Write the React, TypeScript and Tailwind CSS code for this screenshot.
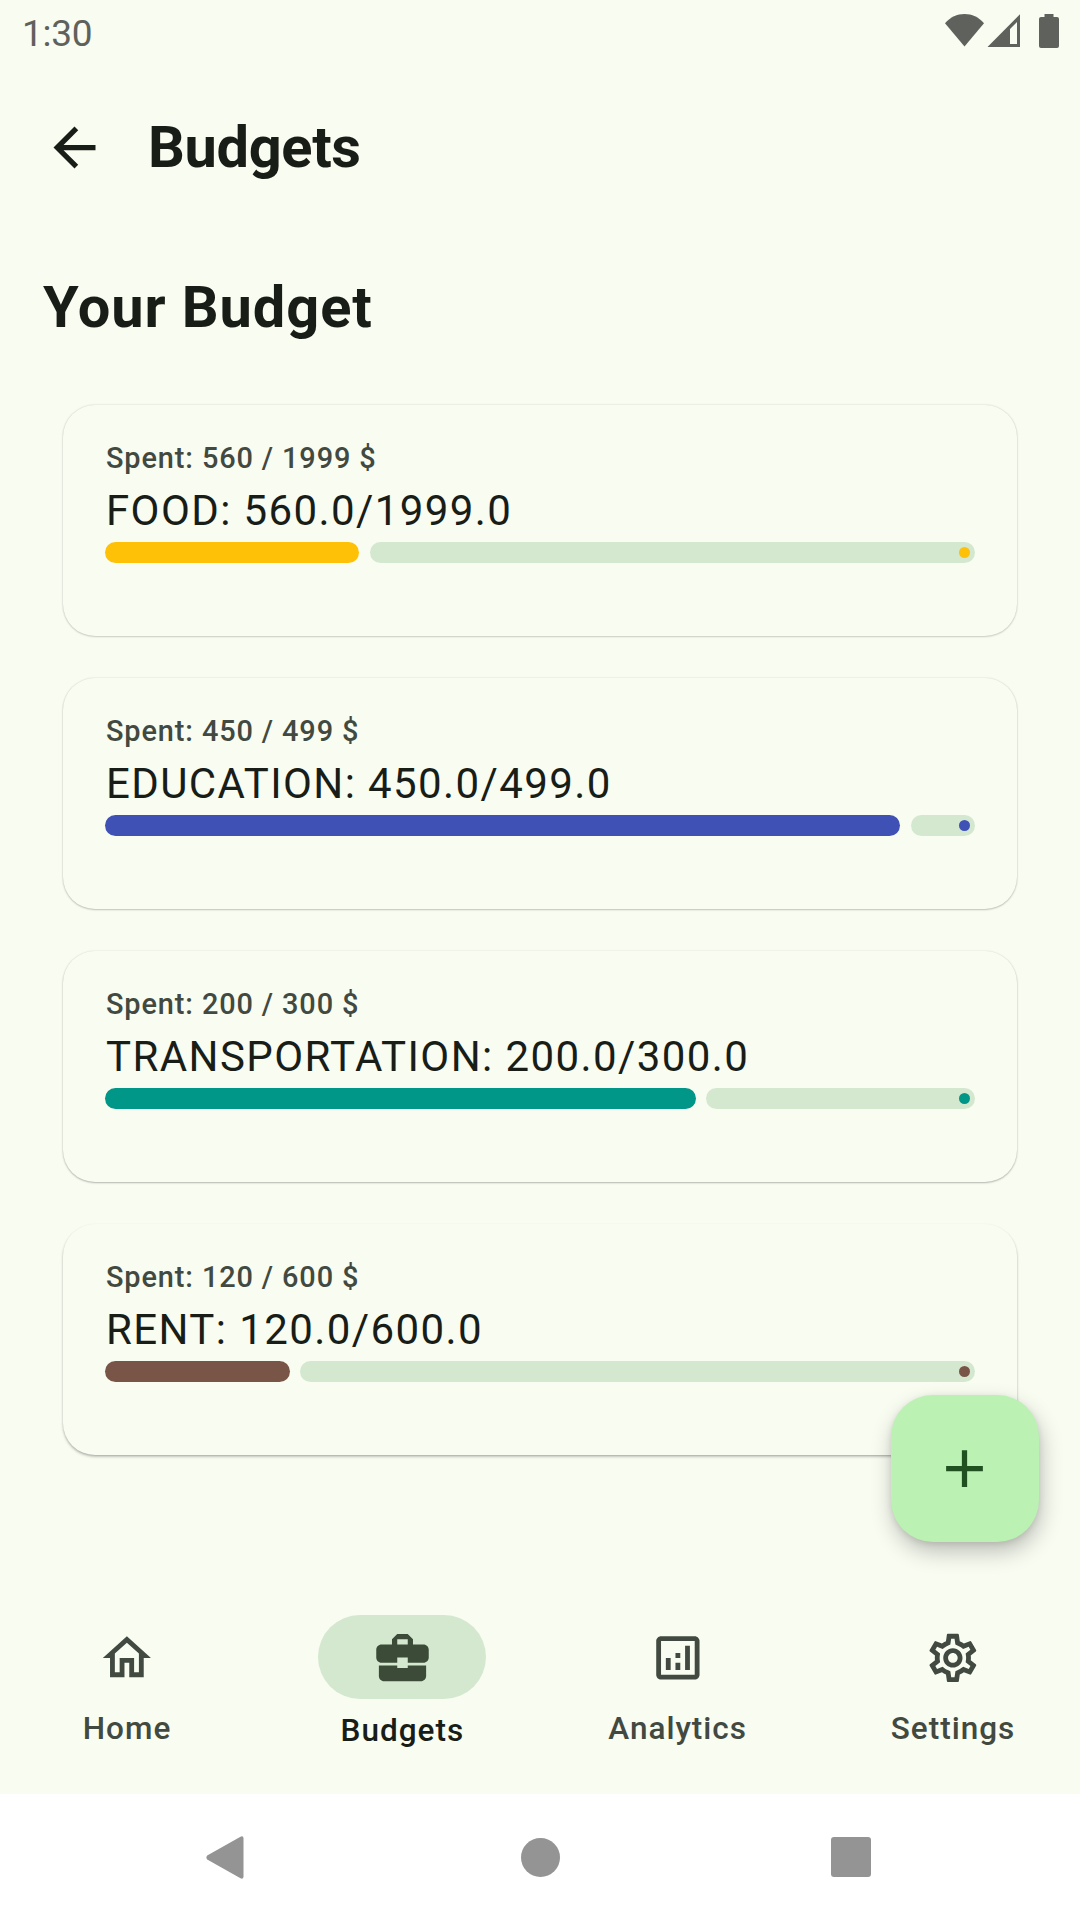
import React from "react";
import {
  MdAdd,
  MdArrowBack,
  MdBusinessCenter,
  MdOutlineAnalytics,
  MdOutlineHome,
  MdOutlineSettings,
} from "react-icons/md";

type Budget = {
  name: string;
  spent: number;
  limit: number;
  fill: string;
  shadow: string;
};

const budgets: Budget[] = [
  { name: "FOOD", spent: 560, limit: 1999, fill: "bg-[#ffc107]", shadow: "shadow-[0_0_2px_rgba(0,0,0,0.18),0_1px_2px_rgba(0,0,0,0.14)]" },
  { name: "EDUCATION", spent: 450, limit: 499, fill: "bg-[#3f51b5]", shadow: "shadow-[0_0_2px_rgba(0,0,0,0.14),0_1px_2px_rgba(0,0,0,0.2)]" },
  { name: "TRANSPORTATION", spent: 200, limit: 300, fill: "bg-[#009688]", shadow: "shadow-[0_0_2px_rgba(0,0,0,0.1),0_1px_2px_rgba(0,0,0,0.26)]" },
  { name: "RENT", spent: 120, limit: 600, fill: "bg-[#795548]", shadow: "shadow-[0_1px_2px_rgba(0,0,0,0.16),0_2px_3px_rgba(0,0,0,0.18)]" },
];

function StatusBar() {
  return (
    <div className="flex h-[63px] shrink-0 items-start justify-between pl-[22px] pr-[21px] text-[#5f615c]">
      <span className="mt-[12px] text-[37px] leading-[44px] tracking-[-0.3px]">1:30</span>
      <svg className="mt-[14px] h-[34px] w-[114px]" viewBox="0 0 114 34" fill="currentColor">
        <path d="M0 9.3C5.500 3 12 0 19.500 0S33.500 3 39 9.300L19.500 32.500z" />
        <path fillRule="evenodd" d="M75 0.300V33H42.500zM72 8L65 15V30H72z" />
        <path d="M99.500 0h9v3h3.500a2 2 0 0 1 2 2v27a2 2 0 0 1-2 2h-16a2 2 0 0 1-2-2V5a2 2 0 0 1 2-2h3.500z" />
      </svg>
    </div>
  );
}

function BudgetCard({ name, spent, limit, fill, shadow }: Budget) {
  return (
    <section className={`h-[231px] rounded-[32px] bg-[#f8fcf1] px-[42px] pt-8 ${shadow}`}>
      <p className="pl-px text-[28.9px] font-medium leading-[42px] tracking-[0.88px] text-[#424940]">
        Spent: {spent} / {limit} $
      </p>
      <h2 className="pl-px text-[42px] leading-[63px] tracking-[1.4px] text-[#191d17]">
        {name}: {spent.toFixed(1)}/{limit.toFixed(1)}
      </h2>
      <div className="flex h-[21px] gap-[10.5px]">
        <div
          className={`shrink-0 rounded-full ${fill}`}
          style={{ width: (spent / limit) * 870 + 10.5 }}
        />
        <div className="flex flex-1 items-center justify-end rounded-full bg-[#d4e8cf] pr-[5px]">
          <span className={`size-[11px] rounded-full ${fill}`} />
        </div>
      </div>
    </section>
  );
}

function NavItem({ icon, label, active }: { icon: React.ReactNode; label: string; active?: boolean }) {
  return (
    <button className={`flex w-[168px] flex-col items-center ${active ? "text-[#191d17]" : "text-[#424940]"}`}>
      <span
        className={`flex h-[84px] w-[168px] items-center justify-center rounded-full ${
          active ? "bg-[#d4e8cf] text-[#3b4b38]" : "pt-[2px]"
        }`}
      >
        {icon}
      </span>
      <span className={`text-[31.5px] font-medium leading-[42px] tracking-[1px] ${active ? "mt-[11px]" : "mt-[9px]"}`}>
        {label}
      </span>
    </button>
  );
}

export default function App() {
  return (
    <div className="flex h-[1920px] w-[1080px] flex-col overflow-hidden bg-[#f8fcf1] font-[Roboto,sans-serif]">
      <StatusBar />
      <header className="flex h-[168px] shrink-0 items-center pl-[43px] text-[#191d17]">
        <MdArrowBack size={63} />
        <h1 className="ml-[42px] text-[57.75px] font-bold leading-[74px] tracking-[-0.35px]">Budgets</h1>
      </header>
      <main className="relative flex-1">
        <h2 className="ml-[43px] mt-[39px] text-[57.75px] font-bold leading-[74px] tracking-[0.9px] text-[#191d17]">
          Your Budget
        </h2>
        <div className="mx-[63px] mt-[61px] flex flex-col gap-[42px]">
          {budgets.map((b) => (
            <BudgetCard key={b.name} {...b} />
          ))}
        </div>
        <button className="absolute right-[41.500px] top-[1164px] flex h-[147px] w-[148px] items-center justify-center rounded-[42px] bg-[#bbf1b3] text-[#215020] shadow-[2px_10px_22px_rgba(0,0,0,0.24),0_2px_6px_rgba(0,0,0,0.1)]">
          <MdAdd size={63} />
        </button>
      </main>
      <nav className="flex h-[179px] shrink-0 justify-between px-[43px]">
        <NavItem icon={<MdOutlineHome size={57.75} />} label="Home" />
        <NavItem icon={<MdBusinessCenter size={63} />} label="Budgets" active />
        <NavItem icon={<MdOutlineAnalytics size={57.75} />} label="Analytics" />
        <NavItem icon={<MdOutlineSettings size={57.75} />} label="Settings" />
      </nav>
      <div className="flex h-[126px] shrink-0 items-center bg-white pl-[206px] text-[#949494]">
        <svg className="h-[43px] w-[38px]" viewBox="0 0 38 43" fill="currentColor">
          <path d="M1.200 19.500L34.500 0.700Q37.500-0.500 37.500 2.500V40.500Q37.500 43.500 34.500 42.300L1.200 23.500Q-.400 21.500 1.200 19.500z" />
        </svg>
        <span className="ml-[276.500px] size-[39px] rounded-full bg-current" />
        <span className="ml-[271.500px] size-10 rounded-[3px] bg-current" />
      </div>
    </div>
  );
}
